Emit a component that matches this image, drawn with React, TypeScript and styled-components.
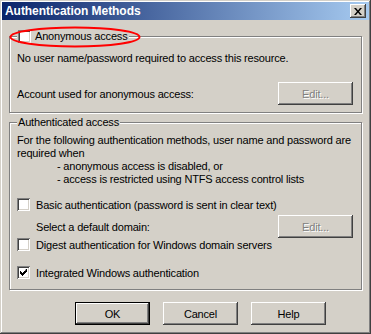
import styled, { createGlobalStyle } from 'styled-components';

const GlobalStyle = createGlobalStyle`
  html, body {
    margin: 0;
    padding: 0;
    background: #d4d0c8;
  }
  body {
    font-family: "Liberation Sans", Arial, sans-serif;
    font-size: 11px;
    letter-spacing: -0.18px;
    color: #000;
  }
`;

const Window = styled.div`
  position: relative;
  width: 371px;
  height: 334px;
  box-sizing: border-box;
  padding: 2px;
  background: #d4d0c8;
  box-shadow: inset -1px -1px #404040, inset 1px 1px #d4d0c8, inset -2px -2px #808080, inset 2px 2px #fff;
  display: flex;
  flex-direction: column;
`;

const TitleBar = styled.div`
  height: 18px;
  display: flex;
  align-items: center;
  justify-content: space-between;
  padding: 0 3px 0 3px;
  background: linear-gradient(to right, #0a246a, #a6caf0);
  color: #fff;
  font-weight: bold;
  font-size: 12px;
  letter-spacing: -0.05px;
`;

const CloseButton = styled.div`
  width: 16px;
  height: 14px;
  box-sizing: border-box;
  background: #d4d0c8;
  box-shadow: inset -1px -1px #404040, inset 1px 1px #fff, inset -2px -2px #808080, inset 2px 2px #d4d0c8;
  display: flex;
  align-items: center;
  justify-content: center;
`;

const Body = styled.div`
  padding: 9px 7px 0 7px;
  display: flex;
  flex-direction: column;
`;

const Group = styled.fieldset<{ $pad: string; $top?: number }>`
  margin: ${(p) => p.$top ?? 0}px 0 0 0;
  padding: ${(p) => p.$pad};
  min-width: 0;
  border: 1px solid #808080;
  box-shadow: inset 1px 1px #fff, 1px 1px #fff;
`;

const Legend = styled.legend`
  padding: 0 1px;
  margin: 0;
  height: 14px;
  display: flex;
  align-items: center;
  gap: 4px;
  background: #d4d0c8;
`;

const Line = styled.div<{ $indent?: number }>`
  height: 13px;
  line-height: 13px;
  padding-left: ${(p) => p.$indent ?? 0}px;
  white-space: nowrap;
`;

const Row = styled.div<{ $top?: number; $indent?: number }>`
  display: flex;
  align-items: center;
  justify-content: space-between;
  margin-top: ${(p) => p.$top ?? 0}px;
  padding-left: ${(p) => p.$indent ?? 0}px;
`;

const CheckRow = styled.label<{ $top?: number }>`
  display: flex;
  align-items: center;
  gap: 6px;
  height: 13px;
  margin-top: ${(p) => p.$top ?? 0}px;
`;

const Box = styled.span`
  width: 13px;
  height: 13px;
  box-sizing: border-box;
  background: #fff;
  box-shadow: inset 1px 1px #808080, inset -1px -1px #fff, inset 2px 2px #404040, inset -2px -2px #d4d0c8;
  display: flex;
  align-items: center;
  justify-content: center;
  flex: none;
`;

const Button = styled.div<{ $default?: boolean; $disabled?: boolean }>`
  width: 75px;
  height: 23px;
  box-sizing: border-box;
  background: #d4d0c8;
  display: flex;
  align-items: center;
  justify-content: center;
  font-size: 11px;
  color: ${(p) => (p.$disabled ? '#808080' : '#000')};
  text-shadow: ${(p) => (p.$disabled ? '1px 1px 0 #fff' : 'none')};
  border: ${(p) => (p.$default ? '1px solid #000' : 'none')};
  box-shadow: inset -1px -1px #404040, inset 1px 1px #fff, inset -2px -2px #808080, inset 2px 2px #d4d0c8;
`;

const ButtonBar = styled.div`
  display: flex;
  gap: 13px;
  margin-top: 12px;
  padding-left: 66px;
`;

const Highlight = styled.svg`
  position: absolute;
  left: 9px;
  top: 26px;
  pointer-events: none;
`;

const Check = () => (
  <svg width="7" height="7" viewBox="0 0 7 7">
    <path d="M6 0h1v3h-1v1h-1v1h-1v1h-1v1h-1v-1h-1v-1h-1v-3h1v1h1v1h1v-1h1v-1h1z" fill="#000" />
  </svg>
);

const CheckBox = ({ checked }: { checked?: boolean }) => <Box>{checked && <Check />}</Box>;

export default function App() {
  return (
    <>
      <GlobalStyle />
      <Window>
        <TitleBar>
          <span>Authentication Methods</span>
          <CloseButton>
            <svg width="8" height="7" viewBox="0 0 8 7">
              <path d="M0 0h2l2 2.5L6 0h2L5 3.5 8 7H6L4 4.5 2 7H0l3-3.5z" fill="#000" />
            </svg>
          </CloseButton>
        </TitleBar>

        <Body>
          <Group $pad="9px 8px 7px 7px">
            <Legend>
              <CheckBox />
              <span>Anonymous access</span>
            </Legend>
            <Line>No user name/password required to access this resource.</Line>
            <Row $top={17}>
              <span>Account used for anonymous access:</span>
              <Button $disabled>Edit...</Button>
            </Row>
          </Group>

          <Group $pad="5px 8px 10px 7px" $top={2}>
            <Legend>Authenticated access</Legend>
            <Line>For the following authentication methods, user name and password are</Line>
            <Line>required when</Line>
            <Line $indent={40}>- anonymous access is disabled, or</Line>
            <Line $indent={40}>- access is restricted using NTFS access control lists</Line>
            <CheckRow $top={12}>
              <CheckBox />
              <span>Basic authentication (password is sent in clear text)</span>
            </CheckRow>
            <Row $top={4} $indent={19}>
              <span>Select a default domain:</span>
              <Button $disabled>Edit...</Button>
            </Row>
            <CheckRow>
              <CheckBox />
              <span>Digest authentication for Windows domain servers</span>
            </CheckRow>
            <CheckRow $top={15}>
              <CheckBox checked />
              <span>Integrated Windows authentication</span>
            </CheckRow>
          </Group>

          <ButtonBar>
            <Button $default>OK</Button>
            <Button>Cancel</Button>
            <Button>Help</Button>
          </ButtonBar>
        </Body>

        <Highlight width="134" height="22" viewBox="0 0 134 22">
          <ellipse cx="66" cy="11" rx="64.5" ry="9.5" fill="none" stroke="#ff0000" strokeWidth="2" />
        </Highlight>
      </Window>
    </>
  );
}
